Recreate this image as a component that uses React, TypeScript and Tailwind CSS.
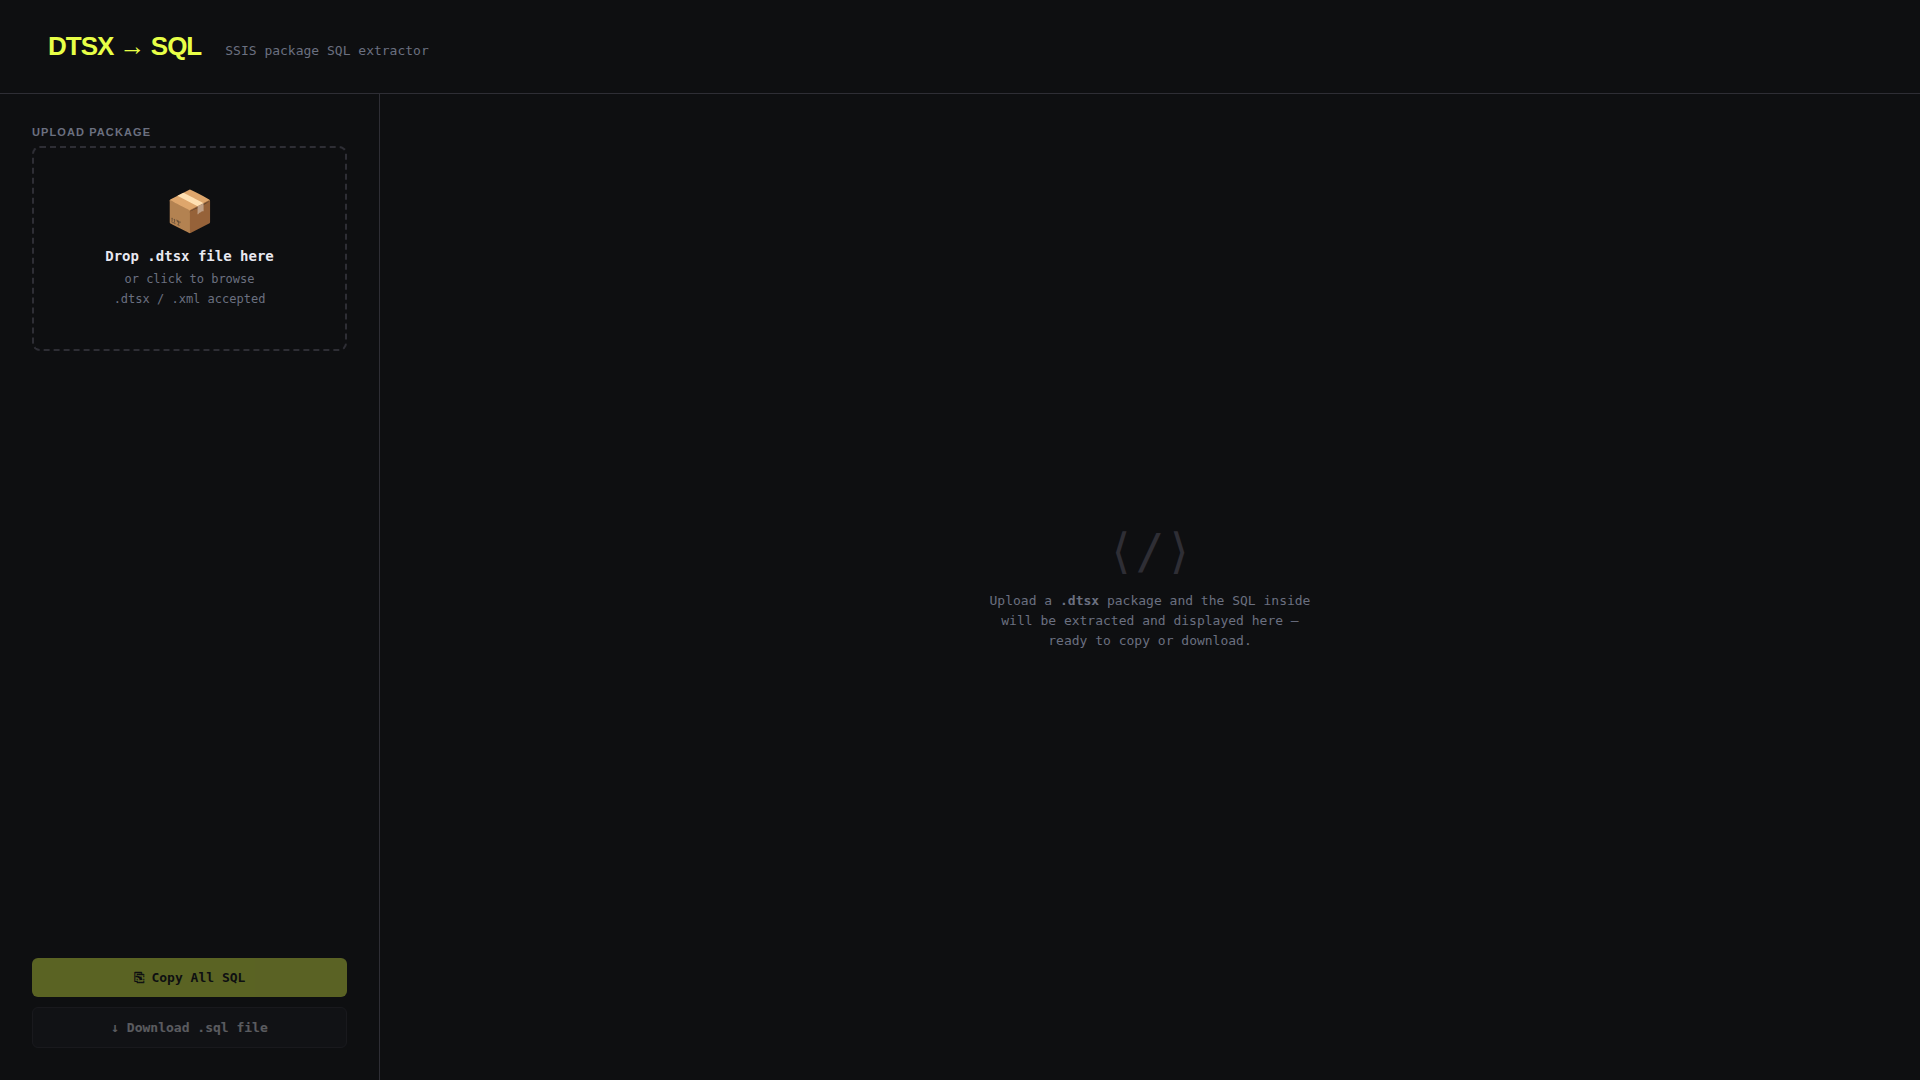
export default function App() {
  return (
    <div className="flex min-h-screen flex-col bg-[#0e0f11] font-['DejaVu_Sans_Mono',monospace] text-[#e8e8f0]">
      <header className="flex items-baseline gap-6 border-b border-[#2e2e35] px-12 py-8">
        <h1 className="font-['Liberation_Sans',sans-serif] text-[26px] leading-[29px] font-extrabold tracking-[-1px] text-[#e8ff47]">DTSX → SQL</h1>
        <span className="text-[13px] leading-4 text-[#6b7080]">SSIS package SQL extractor</span>
      </header>
      <div className="grid flex-1 grid-cols-[380px_1fr]">
        <aside className="flex flex-col border-r border-[#2e2e35] p-8">
          <h2 className="mb-2 font-['Liberation_Sans',sans-serif] text-[11px] leading-3 font-bold tracking-widest text-[#6b7080] uppercase">Upload Package</h2>
          <label className="relative flex cursor-pointer flex-col items-center rounded-lg border-2 border-dashed border-[#2e2e35] px-6 py-10 text-center">
            <input type="file" accept=".dtsx,.xml" className="sr-only" />
            <span className="mb-3.5 text-[40px] leading-[46px]">📦</span>
            <strong className="mb-1 text-[14px] leading-[17px]">Drop .dtsx file here</strong>
            <span className="text-[12px] leading-5 text-[#6b7080]">or click to browse<br />.dtsx / .xml accepted</span>
          </label>
          <div className="mt-auto flex flex-col gap-2.5">
            <button type="button" disabled className="rounded-md bg-[#e8ff47] p-3 text-[13px] leading-[15px] font-bold text-[#0e0f11] opacity-35">⎘ Copy All SQL</button>
            <button type="button" disabled className="rounded-md border border-[#2e2e35] bg-[#17181f] p-3 text-[13px] leading-[15px] font-bold opacity-35">↓ Download .sql file</button>
          </div>
        </aside>
        <main className="flex flex-col items-center justify-center gap-3 text-center text-[#6b7080]">
          <div className="text-[48px] leading-14 text-[#2e2e35]">⟨/⟩</div>
          <p className="max-w-[332px] text-[13px] leading-5">Upload a <strong>.dtsx</strong> package and the SQL inside will be extracted and displayed here — ready to copy or download.</p>
        </main>
      </div>
    </div>
  );
}
